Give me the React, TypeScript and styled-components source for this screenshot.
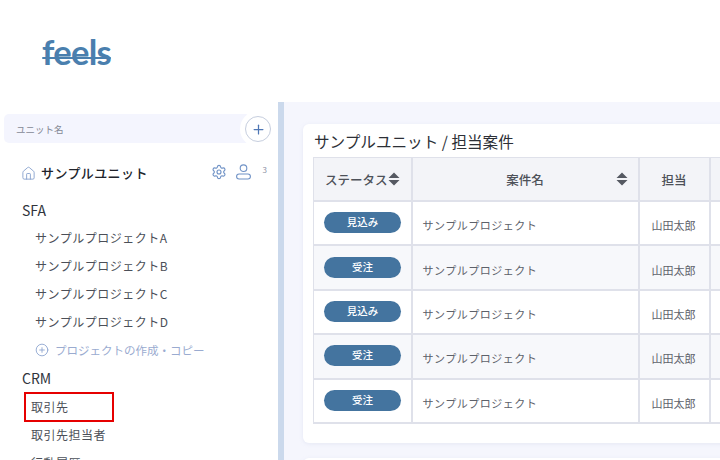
import React from "react";
import styled, { createGlobalStyle } from "styled-components";
import { Home, Settings, Plus, CirclePlus } from "lucide-react";

const GlobalStyle = createGlobalStyle`
  html, body {
    margin: 0;
    padding: 0;
    background: #fff;
    font-family: "Noto Sans CJK JP", "Noto Sans", sans-serif;
  }
`;

const Page = styled.div`
  width: 720px;
  height: 460px;
  overflow: hidden;
  display: flex;
  flex-direction: column;
`;

const Header = styled.header`
  height: 102px;
  flex: none;
  padding: 34px 0 0 42px;
  box-sizing: border-box;
`;

const Logo = styled.div`
  position: relative;
  width: 69px;
  height: 36px;
  font-family: "Lato", sans-serif;
  font-size: 34.5px;
  line-height: 36px;
  font-weight: 700;
  letter-spacing: -0.7px;
  color: #4a7fae;

  &::after {
    content: "";
    position: absolute;
    left: 0;
    right: 0;
    top: 23px;
    height: 2px;
    border-radius: 1px;
    background: #4a7fae;
  }
`;

const Body = styled.div`
  flex: 1;
  display: flex;
  min-height: 0;
`;

const Sidebar = styled.aside`
  width: 278px;
  flex: none;
  padding: 12px 0 0 4px;
  box-sizing: border-box;
  background: #fff;
`;

const ScrollBar = styled.div`
  width: 6px;
  flex: none;
  background: #cbd9ec;
`;

const UnitInput = styled.div`
  position: relative;
  width: 246px;
  height: 29px;
  display: flex;
  align-items: center;
  padding-left: 12px;
  box-sizing: border-box;
  border-radius: 5px;
  background: #f4f5fe;
  font-size: 9.5px;
  color: #858a96;
`;

const AddCircle = styled.div`
  position: absolute;
  right: -21px;
  top: 2px;
  width: 24px;
  height: 24px;
  border: 1px solid #c6cede;
  border-radius: 50%;
  background: #fff;
  box-shadow: 0 0 0 5px #fff;
  display: flex;
  align-items: center;
  justify-content: center;
  color: #4f77b5;
`;

const UnitRow = styled.div`
  display: flex;
  align-items: center;
  height: 30px;
  margin: 15px 0 8px;
  padding-left: 17px;
  color: #8ba4cf;
`;

const UnitName = styled.span`
  margin: -2px 0 0 5px;
  font-size: 13px;
  font-weight: 500;
  letter-spacing: 0.4px;
  color: #20232b;
`;

const UnitIcons = styled.div`
  position: relative;
  display: flex;
  align-items: center;
  gap: 8px;
  margin: -2px 26px 0 auto;
  color: #6f92c6;
`;

const MemberCount = styled.span`
  position: absolute;
  right: -15px;
  top: 0;
  font-size: 8px;
  color: #8d93a6;
`;

const Section = styled.div`
  height: 28px;
  line-height: 28px;
  padding-left: 18px;
  font-size: 14px;
  color: #30343c;
`;

const ProjectItem = styled.div`
  height: 28px;
  line-height: 28px;
  padding-left: 31px;
  font-size: 12px;
  letter-spacing: 0.5px;
  color: #4b4f58;
`;

const CreateItem = styled(ProjectItem)`
  display: flex;
  align-items: center;
  gap: 6px;
  font-size: 11.5px;
  letter-spacing: 0;
  color: #9aabd0;
  svg {
    color: #8ba4cf;
  }
`;

const CrmItem = styled.div<{ $marked?: boolean }>`
  box-sizing: border-box;
  width: 90px;
  white-space: nowrap;
  height: 28px;
  margin-left: 20px;
  padding-left: 7px;
  line-height: 26px;
  font-size: 12px;
  letter-spacing: 0.5px;
  color: #4b4f58;
  ${(p) =>
    p.$marked &&
    `
    height: 30px;
    padding-left: 5px;
    border: 2px solid #e60000;
  `}
`;

const Main = styled.main`
  flex: 1;
  min-width: 0;
  padding: 22px 0 0 19px;
  background: #f5f6fd;
  overflow: hidden;
`;

const Card = styled.section`
  width: 460px;
  height: 319px;
  padding: 5px 0 0 10px;
  box-sizing: border-box;
  border-radius: 6px 0 0 6px;
  background: #fff;
  box-shadow: 0 1px 4px rgba(170, 180, 210, 0.2);
`;

const NextCard = styled(Card)`
  margin-top: 15px;
`;

const CardTitle = styled.h2`
  margin: 0 0 4px 1px;
  height: 24px;
  line-height: 24px;
  font-size: 15.6px;
  font-weight: 400;
  color: #2c2f36;
`;

const Table = styled.table`
  width: 460px;
  table-layout: fixed;
  border-collapse: collapse;
  border: 1px solid #dfe1ea;
`;

const HeadCell = styled.th`
  height: 42px;
  padding: 0;
  border: 2px solid #dfe1ea;
  border-width: 1px 2px 2px 1px;
  background: #f3f4f8;
  font-size: 12.5px;
  font-weight: 500;
  color: #4d5159;
`;

const HeadInner = styled.div`
  position: relative;
  display: flex;
  align-items: center;
  justify-content: center;
`;

const SortMark = styled.svg<{ $far?: boolean }>`
  flex: none;
  ${(p) => (p.$far ? "position: absolute; right: 10px;" : "")}
`;

const Row = styled.tr<{ $shade: boolean }>`
  background: ${(p) => (p.$shade ? "#f7f8fb" : "#fff")};
`;

const Cell = styled.td`
  height: 44.4px;
  padding: 4px 0 0 10px;
  box-sizing: border-box;
  border: 2px solid #dfe1ea;
  border-width: 0 2px 2px 1px;
  font-size: 11px;
  letter-spacing: 0.5px;
  color: #5d616a;
`;

const PersonCell = styled(Cell)`
  padding-left: 12px;
  letter-spacing: 0;
`;

const StatusCell = styled.td`
  padding: 0 0 1px 10px;
  border: 2px solid #dfe1ea;
  border-width: 0 2px 2px 1px;
`;

const Badge = styled.span`
  display: block;
  width: 77px;
  height: 21px;
  line-height: 20px;
  border-radius: 11px;
  background: #44749f;
  text-align: center;
  font-size: 10.5px;
  font-weight: 500;
  color: #fff;
`;

const Sort = ({ far }: { far?: boolean }) => (
  <SortMark $far={far} width="12" height="14" viewBox="0 0 12 14">
    <path d="M6 0.5 L11.5 6 H0.5 Z M6 13.5 L0.5 8 H11.5 Z" fill="#555962" />
  </SortMark>
);

const MemberIcon = () => (
  <svg width="17" height="16" viewBox="0 0 17 16" fill="none" stroke="currentColor" strokeWidth="1.1">
    <circle cx="8.5" cy="4.2" r="3.3" />
    <rect x="1.6" y="10" width="13.8" height="5" rx="2.5" />
  </svg>
);

const projects = ["A", "B", "C", "D"];
const rows = ["見込み", "受注", "見込み", "受注", "受注"];

const App = () => {
  return (
    <Page>
      <GlobalStyle />
      <Header>
        <Logo>feels</Logo>
      </Header>
      <Body>
        <Sidebar>
          <UnitInput>
            ユニット名
            <AddCircle>
              <Plus size={15} strokeWidth={2} />
            </AddCircle>
          </UnitInput>
          <UnitRow>
            <Home size={15} strokeWidth={1.5} />
            <UnitName>サンプルユニット</UnitName>
            <UnitIcons>
              <Settings size={16} strokeWidth={1.7} />
              <MemberIcon />
              <MemberCount>3</MemberCount>
            </UnitIcons>
          </UnitRow>
          <Section>SFA</Section>
          {projects.map((p) => (
            <ProjectItem key={p}>サンプルプロジェクト{p}</ProjectItem>
          ))}
          <CreateItem>
            <CirclePlus size={14} strokeWidth={1.5} />
            プロジェクトの作成・コピー
          </CreateItem>
          <Section>CRM</Section>
          <CrmItem $marked>取引先</CrmItem>
          <CrmItem>取引先担当者</CrmItem>
          <CrmItem>行動履歴</CrmItem>
        </Sidebar>
        <ScrollBar />
        <Main>
          <Card>
            <CardTitle>サンプルユニット / 担当案件</CardTitle>
            <Table>
              <colgroup>
                <col width="98" />
                <col width="227" />
                <col width="71" />
                <col />
              </colgroup>
              <thead>
                <tr>
                  <HeadCell>
                    <HeadInner>
                      ステータス
                      <Sort />
                    </HeadInner>
                  </HeadCell>
                  <HeadCell>
                    <HeadInner>
                      案件名
                      <Sort far />
                    </HeadInner>
                  </HeadCell>
                  <HeadCell>担当</HeadCell>
                  <HeadCell />
                </tr>
              </thead>
              <tbody>
                {rows.map((status, i) => (
                  <Row key={i} $shade={i % 2 === 1}>
                    <StatusCell>
                      <Badge>{status}</Badge>
                    </StatusCell>
                    <Cell>サンプルプロジェクト</Cell>
                    <PersonCell>山田太郎</PersonCell>
                    <Cell />
                  </Row>
                ))}
              </tbody>
            </Table>
          </Card>
          <NextCard />
        </Main>
      </Body>
    </Page>
  );
};

export default App;
